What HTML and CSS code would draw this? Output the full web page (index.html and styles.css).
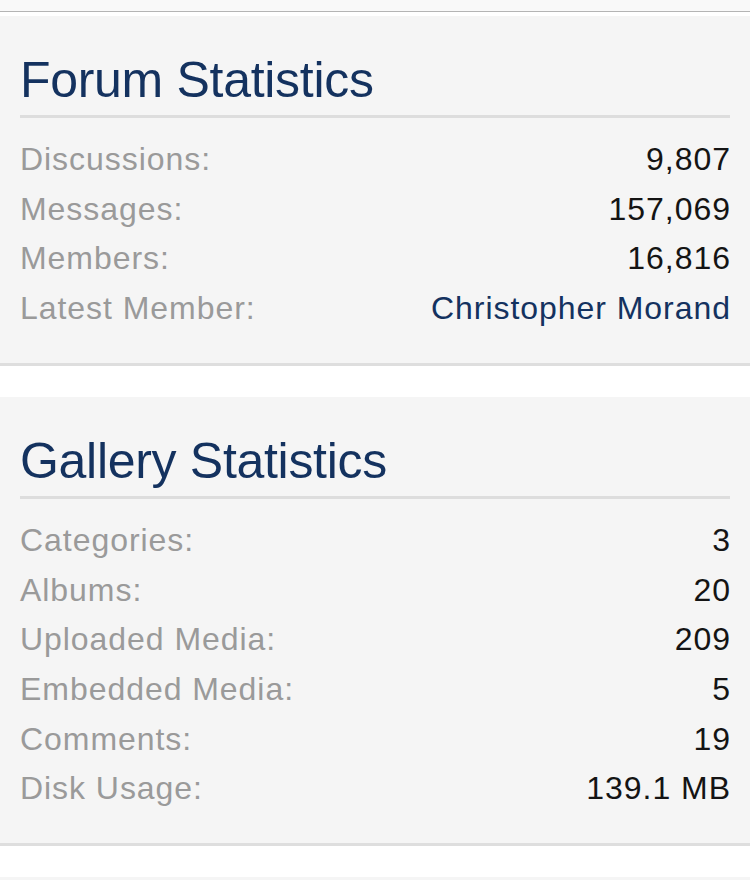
FILE: index.html
```html
<!DOCTYPE html>
<html>
<head>
<meta charset="utf-8">
<link rel="stylesheet" href="styles.css">
</head>
<body>
<div class="topbar"></div>
<div class="page">
  <section class="panel">
    <h2 class="title">Forum Statistics</h2>
    <dl class="stats">
      <div class="row"><dt>Discussions:</dt><dd>9,807</dd></div>
      <div class="row"><dt>Messages:</dt><dd>157,069</dd></div>
      <div class="row"><dt>Members:</dt><dd>16,816</dd></div>
      <div class="row"><dt>Latest Member:</dt><dd><a class="link" href="#">Christopher Morand</a></dd></div>
    </dl>
  </section>
  <section class="panel">
    <h2 class="title">Gallery Statistics</h2>
    <dl class="stats">
      <div class="row"><dt>Categories:</dt><dd>3</dd></div>
      <div class="row"><dt>Albums:</dt><dd>20</dd></div>
      <div class="row"><dt>Uploaded Media:</dt><dd>209</dd></div>
      <div class="row"><dt>Embedded Media:</dt><dd>5</dd></div>
      <div class="row"><dt>Comments:</dt><dd>19</dd></div>
      <div class="row"><dt>Disk Usage:</dt><dd>139.1 MB</dd></div>
    </dl>
  </section>
  <section class="panel panel-stub"></section>
</div>
</body>
</html>
```
FILE: styles.css
```css
html, body {
  margin: 0;
  padding: 0;
  background: #ffffff;
  font-family: "Liberation Sans", Arial, Helvetica, sans-serif;
  overflow: hidden;
}
.topbar {
  height: 11px;
  background: #f9f9f9;
  border-bottom: 1px solid #b4b4b4;
}
.page {
  padding-top: 4px;
  display: flex;
  flex-direction: column;
  gap: 31px;
}
.panel {
  background: #f5f5f5;
  border-bottom: 3px solid #dedede;
  padding: 34px 20px 29px;
}
.panel-stub {
  height: 40px;
  padding: 0;
}
.title {
  margin: 0;
  font-size: 50px;
  line-height: 61px;
  font-weight: normal;
  letter-spacing: -0.3px;
  color: #14325f;
  padding-bottom: 4px;
  border-bottom: 3px solid #dddddd;
}
.stats {
  margin: 17px 0 0;
}
.row {
  display: flex;
  justify-content: space-between;
  font-size: 32px;
  line-height: 49.7px;
  letter-spacing: 0.95px;
}
.row dt {
  color: #9a9a9a;
}
.row dd {
  margin: 0 -0.95px 0 0;
  color: #141414;
}
.link {
  color: #14325f;
  text-decoration: none;
}
```
